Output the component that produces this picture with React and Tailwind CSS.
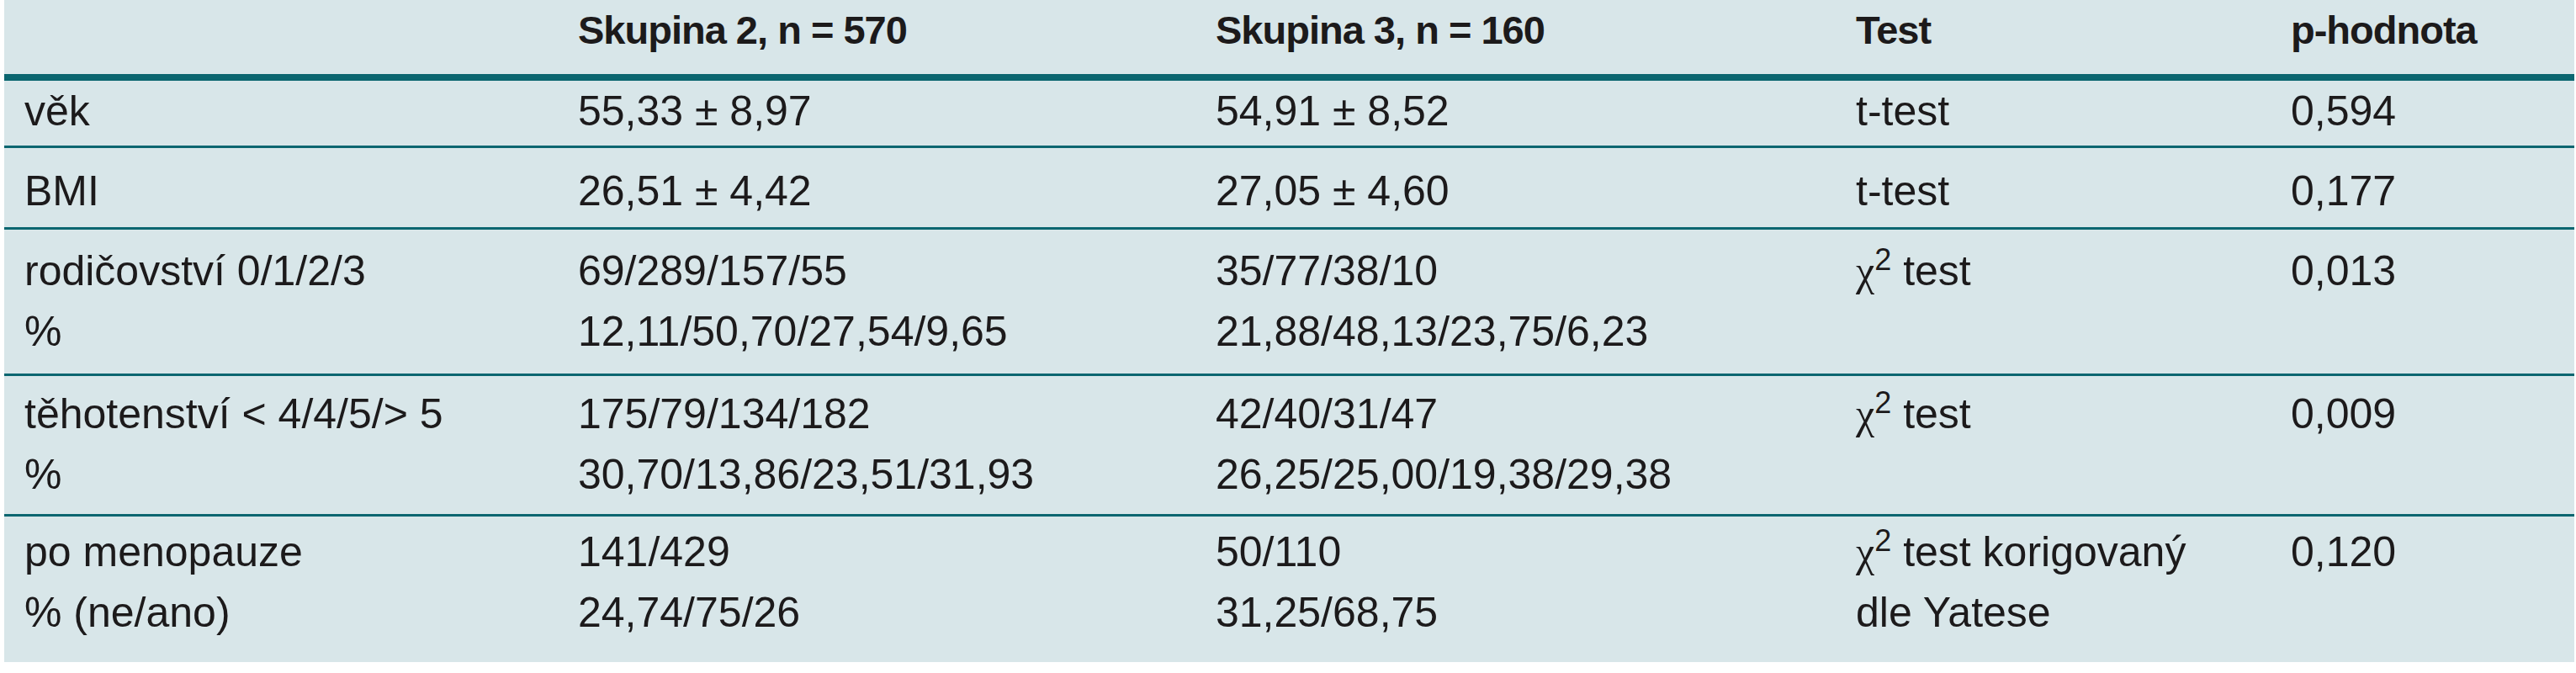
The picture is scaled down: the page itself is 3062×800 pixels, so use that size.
import React from "react";

const rows = [
  { pad: "pt-0 pb-[5px]", cells: [["věk"], ["55,33 ± 8,97"], ["54,91 ± 8,52"], ["t-test"], ["0,594"]] },
  { pad: "pt-[15px] pb-[7px]", cells: [["BMI"], ["26,51 ± 4,42"], ["27,05 ± 4,60"], ["t-test"], ["0,177"]] },
  {
    pad: "pt-[13px] pb-[14px]",
    cells: [
      ["rodičovství 0/1/2/3", "%"],
      ["69/289/157/55", "12,11/50,70/27,54/9,65"],
      ["35/77/38/10", "21,88/48,13/23,75/6,23"],
      ["chi"],
      ["0,013"],
    ],
  },
  {
    pad: "pt-[9px] pb-[11px]",
    cells: [
      ["těhotenství < 4/4/5/> 5", "%"],
      ["175/79/134/182", "30,70/13,86/23,51/31,93"],
      ["42/40/31/47", "26,25/25,00/19,38/29,38"],
      ["chi"],
      ["0,009"],
    ],
  },
  {
    pad: "pt-[6px] pb-[23px]",
    cells: [
      ["po menopauze", "% (ne/ano)"],
      ["141/429", "24,74/75/26"],
      ["50/110", "31,25/68,75"],
      ["chi korigovaný", "dle Yatese"],
      ["0,120"],
    ],
  },
];

const Chi = ({ rest }) => (
  <>
    <span className="font-['Liberation_Serif',serif]">χ</span>
    <sup className="text-[36px] leading-none">2</sup> test{rest ? " " + rest : ""}
  </>
);

const Line = ({ text }) => {
  if (text === "chi") return <div><Chi /></div>;
  if (text === "chi korigovaný") return <div><Chi rest="korigovaný" /></div>;
  return <div>{text}</div>;
};

const cols = "grid grid-cols-[658px_758px_761px_517px_1fr]";

export default function App() {
  return (
    <div className="w-[3062px] h-[800px] bg-white">
      <div className="ml-[5px] w-[3055px] bg-[#d8e6e9] text-[#1c1a1b] font-['Liberation_Sans',Arial,sans-serif] text-[50px] leading-[72px]">
        <div className={`${cols} pb-[16px] font-bold text-[47px] tracking-[-1px] border-b-[8px] border-[#0b6670]`}>
          <div className="pl-6"></div>
          <div className="pl-6">Skupina 2, n = 570</div>
          <div className="pl-6">Skupina 3, n = 160</div>
          <div className="pl-6">Test</div>
          <div className="pl-6">p-hodnota</div>
        </div>
        {rows.map((row, i) => (
          <div
            key={i}
            className={`${cols} ${row.pad} ${i < rows.length - 1 ? "border-b-[3px] border-[#0b6670]" : ""}`}
          >
            {row.cells.map((lines, j) => (
              <div key={j} className="pl-6 whitespace-nowrap">
                {lines.map((t, k) => (
                  <Line key={k} text={t} />
                ))}
              </div>
            ))}
          </div>
        ))}
      </div>
    </div>
  );
}
